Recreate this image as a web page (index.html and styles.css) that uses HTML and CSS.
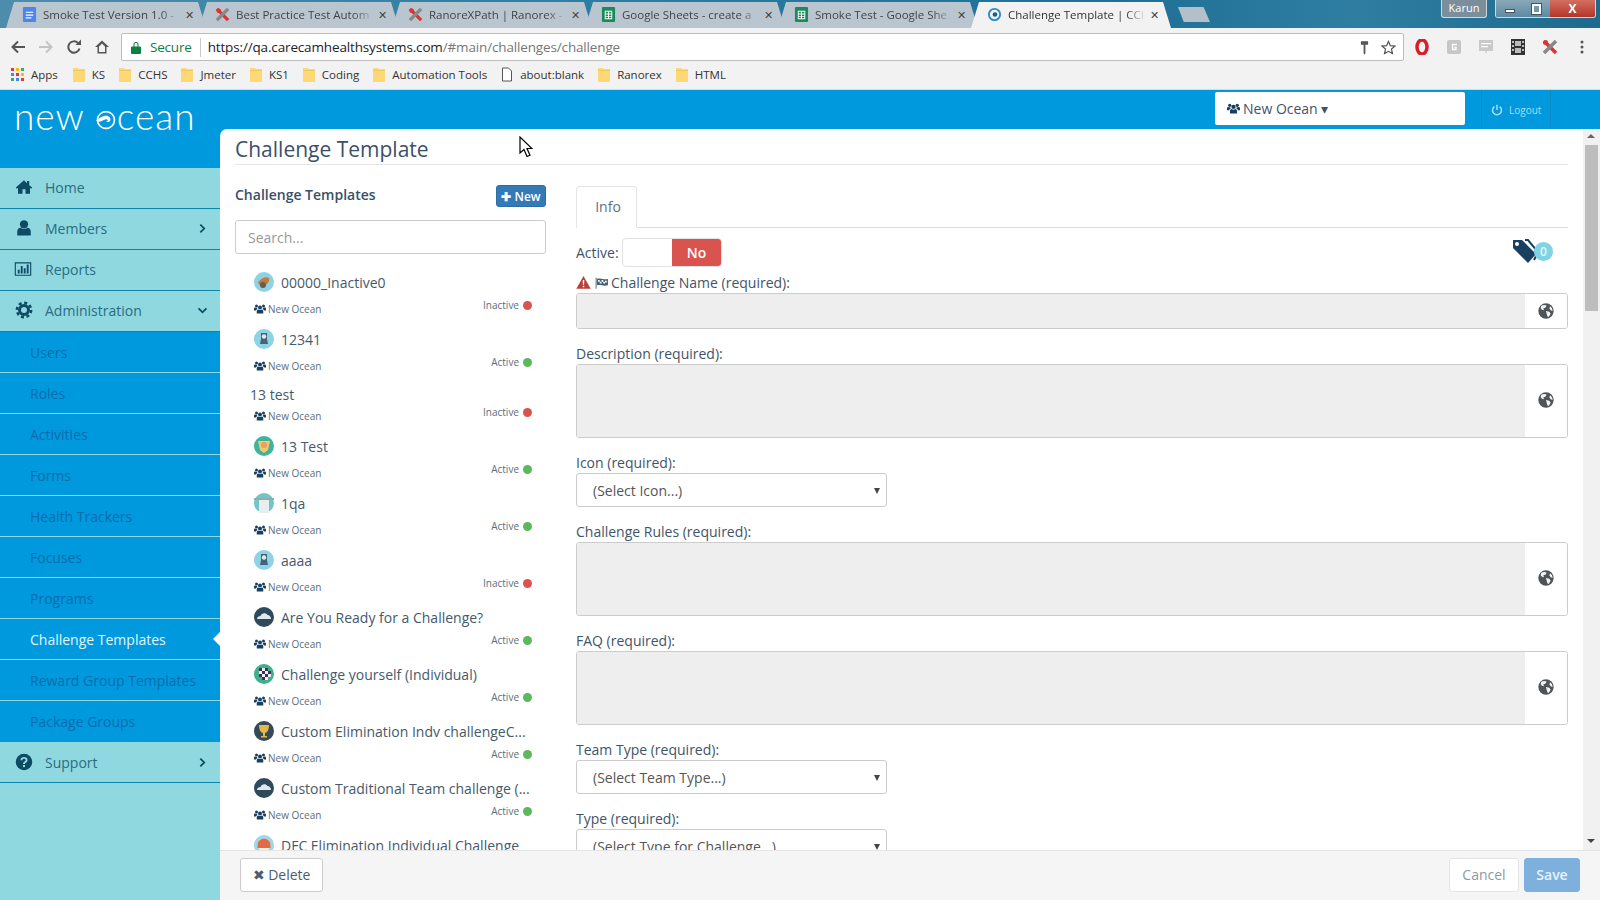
FILE: index.html
```html
<!doctype html>
<html lang="en">
<head>
    <meta charset="UTF-8">
    <title>Challenge Template | CCI</title>
    <link rel="stylesheet" href="styles.css">
</head>
<body>
    <svg class="defs" width="0" height="0">
        <symbol id="i-home" viewBox="0 0 24 24"><path d="M12 3 1 12.6l1.4 1.7L4 13v8h6v-6h4v6h6v-8l1.6 1.3 1.4-1.7L19 9.7V4h-3v3z"/></symbol>
        <symbol id="i-user" viewBox="0 0 24 24"><circle cx="12" cy="7" r="5.5"/><path d="M3 22v-5c0-3.500 2-5.500 4.500-5.500 1.200 1 2.800 1.700 4.500 1.700s3.300-.7 4.500-1.700c2.500 0 4.500 2 4.500 5.500v5z"/></symbol>
        <symbol id="i-chart" viewBox="0 0 24 24"><path d="M1 3h22v18H1zm1.500 1.500v15h19v-15z" fill-rule="evenodd"/><path d="M5 13h2.500v5H5zM9 8h2.500v10H9zM13 11h2.500v7H13zM17 6h2.500v12H17z"/></symbol>
        <symbol id="i-cog" viewBox="0 0 24 24"><circle cx="12" cy="12" r="6" fill="none" stroke="currentColor" stroke-width="4"/><circle cx="12" cy="12" r="9.500" fill="none" stroke="currentColor" stroke-width="3.500" stroke-dasharray="4 3.460"/></symbol>
        <symbol id="i-help" viewBox="0 0 24 24"><circle cx="12" cy="12" r="11"/><path d="M8.500 9.500c0-2 1.500-3 3.500-3s3.500 1.200 3.500 3c0 2.500-3.500 2.500-3.500 5" fill="none" stroke="#8fd8e0" stroke-width="2.600"/><rect x="10.600" y="16" width="2.800" height="2.800" fill="#8fd8e0"/></symbol>
        <symbol id="i-users" viewBox="0 0 24 24"><circle cx="12" cy="9" r="4"/><path d="M5.500 21v-4.500c0-2 1.500-3.500 3-3.500 1 .8 2.200 1.200 3.500 1.200s2.500-.4 3.500-1.200c1.500 0 3 1.500 3 3.500V21z"/><circle cx="5" cy="6" r="3"/><circle cx="19" cy="6" r="3"/><path d="M0 15v-3.500C0 10 1 9 2.500 9c.7.500 1.500.8 2.500.8.400 0 .8 0 1-.1-.1 1 .2 2 .8 2.800C5 13 4 14 3.800 15zM24 15v-3.500C24 10 23 9 21.500 9c-.7.500-1.500.8-2.500.8-.4 0-.8 0-1-.1.100 1-.2 2-.8 2.800 1.800.5 2.800 1.500 3 2.500z"/></symbol>
        <symbol id="i-globe" viewBox="0 0 24 24"><circle cx="12" cy="12" r="11.500" fill="#4f5459"/><path d="M5 4c3-1.500 6-1.500 8 0l-2 3-3 1 1 3-3-1-2-2zM12 12l5 1 2 3-3 5-2-1-1-4zM18 5l3 3 1 4-3-1-2-3z" fill="#f4f4f4"/></symbol>
        <symbol id="i-warn" viewBox="0 0 24 24"><path d="M12 1.500 23.500 22H.5z"/><path d="M10.700 8h2.600l-.4 7.500h-1.800zM10.800 17h2.400v2.400h-2.400z" fill="#fff"/></symbol>
        <symbol id="i-flag" viewBox="0 0 24 24"><path d="M2 3h1.500v19H2z"/><path d="M4 5c5-2 8 2 19 0v11c-9 2-13-2-19 0zm2 2v3h3V7zm6 0v3h3V7zm6 1v3h3V8zM9 10v3h3v-3zm6 0v3h3v-3z" fill-rule="evenodd"/></symbol>
        <symbol id="i-folder" viewBox="0 0 12 15"><path d="M0 1h5l1 1h6v13H0z" fill="#fcd877"/><path d="M0 3h12v1H0z" fill="#f4c75d"/></symbol>
    </svg>

    <div class="browser">
        <div class="tabstrip">
            <div class="tab">
                <svg class="favicon" viewBox="0 0 16 16"><rect x="1" width="14" height="16" rx="1" fill="#4d86e8"/><path d="M4 5h8v1.200H4zM4 8h8v1.200H4zM4 11h6v1.200H4z" fill="#fff"/></svg>
                <span class="tab-title">Smoke Test Version 1.0 -</span><span class="tab-x">✕</span>
            </div>
            <div class="tab">
                <svg class="favicon" viewBox="0 0 16 16"><path d="M2 2 14 14" stroke="#d33" stroke-width="3.500"/><path d="M14 2 2 14" stroke="#888" stroke-width="3.500"/><circle cx="4" cy="4" r="2.500" fill="#d33"/></svg>
                <span class="tab-title">Best Practice Test Autom</span><span class="tab-x">✕</span>
            </div>
            <div class="tab">
                <svg class="favicon" viewBox="0 0 16 16"><path d="M2 2 14 14" stroke="#d33" stroke-width="3.500"/><path d="M14 2 2 14" stroke="#888" stroke-width="3.500"/><circle cx="4" cy="4" r="2.500" fill="#d33"/></svg>
                <span class="tab-title">RanoreXPath | Ranorex -</span><span class="tab-x">✕</span>
            </div>
            <div class="tab">
                <svg class="favicon" viewBox="0 0 16 16"><rect x="1" width="14" height="16" rx="1" fill="#1b8a5a"/><path d="M4 4h8v9H4zm1 1v2h2.500V5zm3.500 0v2H11V5zM5 8v1.500h2.500V8zm3.500 0v1.500H11V8zM5 10.500V12h2.500v-1.500zm3.500 0V12H11v-1.500z" fill="#fff" fill-rule="evenodd"/></svg>
                <span class="tab-title">Google Sheets - create a</span><span class="tab-x">✕</span>
            </div>
            <div class="tab">
                <svg class="favicon" viewBox="0 0 16 16"><rect x="1" width="14" height="16" rx="1" fill="#1b8a5a"/><path d="M4 4h8v9H4zm1 1v2h2.500V5zm3.500 0v2H11V5zM5 8v1.500h2.500V8zm3.500 0v1.500H11V8zM5 10.500V12h2.500v-1.500zm3.500 0V12H11v-1.500z" fill="#fff" fill-rule="evenodd"/></svg>
                <span class="tab-title">Smoke Test - Google She</span><span class="tab-x">✕</span>
            </div>
            <div class="tab tab-active">
                <svg class="favicon" viewBox="0 0 16 16"><circle cx="8" cy="8" r="6" fill="none" stroke="#2b8fc4" stroke-width="2"/><circle cx="8.500" cy="8" r="2.500" fill="#1d5f86"/></svg>
                <span class="tab-title">Challenge Template | CCI</span><span class="tab-x">✕</span>
            </div>
            <div class="tab-new"></div>
            <div class="window-btns">
                <div class="profile">Karun</div>
                <div class="win-group">
                    <div class="win-btn"><span class="win-min"></span></div>
                    <div class="win-btn"><span class="win-max"></span></div>
                    <div class="win-btn win-close">X</div>
                </div>
            </div>
        </div>

        <div class="toolbar">
            <svg class="tool" viewBox="0 0 16 16"><path d="M15 8H3M8 2.500 2.500 8 8 13.500" fill="none" stroke="#555" stroke-width="2"/></svg>
            <svg class="tool" viewBox="0 0 16 16"><path d="M1 8h12M8 2.500 13.500 8 8 13.500" fill="none" stroke="#c4c4c4" stroke-width="2"/></svg>
            <svg class="tool" viewBox="0 0 16 16"><path d="M13.500 9.500A5.700 5.700 0 1 1 12 4" fill="none" stroke="#555" stroke-width="2"/><path d="M9.500 6H15V.5z" fill="#555"/></svg>
            <svg class="tool" viewBox="0 0 16 16"><path d="M8 1.500 1 8h2.500v6.500h9V8H15zM5 13V7.500l3-3 3 3V13z" fill="#555" fill-rule="evenodd"/></svg>
            <div class="omnibox">
                <svg class="lock" viewBox="0 0 10 13"><path d="M2.500 6V3.500a2.500 2.500 0 0 1 5 0V6H6.500V3.500a1.500 1.500 0 0 0-3 0V6z" fill="#0b8043"/><rect y="5.500" width="10" height="7.500" rx="1" fill="#0b8043"/></svg>
                <span class="secure">Secure</span>
                <span class="url"><span class="url-host">https://qa.carecamhealthsystems.com</span>/#main/challenges/challenge</span>
                <svg class="omni-icon" viewBox="0 0 10 16"><path d="M1 1h8v4H6v9.500L5 16l-1-1.500V5H1z" fill="#555"/></svg>
                <svg class="omni-icon omni-star" viewBox="0 0 16 16"><path d="m8 1.500 2 4.500 4.800.5-3.600 3.200 1 4.800L8 12.100l-4.200 2.400 1-4.800L1.200 6.500 6 6z" fill="none" stroke="#555" stroke-width="1.300"/></svg>
            </div>
            <div class="extensions">
                <svg class="ext" viewBox="0 0 16 16"><ellipse cx="8" cy="8" rx="5" ry="7" fill="none" stroke="#d5202a" stroke-width="3.500"/></svg>
                <svg class="ext" viewBox="0 0 16 16"><rect x="1" y="1" width="14" height="14" rx="2" fill="#c6c6c6"/><path d="M11 5.500H6.500v5H10V8.500H8.500" fill="none" stroke="#fff" stroke-width="1.300"/></svg>
                <svg class="ext" viewBox="0 0 16 16"><path d="M1 1h14v11H9l-1 3-1-3H1z" fill="#c9c9c9"/><path d="M3 4h10v1.200H3zM3 7h7v1.200H3z" fill="#fff"/></svg>
                <svg class="ext" viewBox="0 0 16 16"><path d="M1 0h14v16H1z" fill="#333"/><path d="M2 2h2v2H2zm0 4h2v2H2zm0 4h2v2H2zm10-8h2v2h-2zm0 4h2v2h-2zm0 4h2v2h-2zM5 2h6v5H5zm0 7h6v5H5z" fill="#bbb"/></svg>
                <svg class="ext" viewBox="0 0 16 16"><path d="M2 2 14 14" stroke="#d33" stroke-width="3.500"/><path d="M14 2 2 14" stroke="#888" stroke-width="3.500"/><circle cx="3.500" cy="3.500" r="2.500" fill="#d33"/></svg>
                <svg class="ext" viewBox="0 0 16 16"><circle cx="8" cy="3" r="1.500" fill="#555"/><circle cx="8" cy="8" r="1.500" fill="#555"/><circle cx="8" cy="13" r="1.500" fill="#555"/></svg>
            </div>
        </div>

        <div class="bookmarks">
            <span class="bm bm-apps">
                <svg class="apps-grid" viewBox="0 0 13 13">
                    <rect width="3" height="3" fill="#e33"/><rect x="5" width="3" height="3" fill="#fb0"/><rect x="10" width="3" height="3" fill="#3a7"/>
                    <rect y="5" width="3" height="3" fill="#48e"/><rect x="5" y="5" width="3" height="3" fill="#e33"/><rect x="10" y="5" width="3" height="3" fill="#fb0"/>
                    <rect y="10" width="3" height="3" fill="#3a7"/><rect x="5" y="10" width="3" height="3" fill="#48e"/><rect x="10" y="10" width="3" height="3" fill="#e33"/>
                </svg>Apps</span>
            <span class="bm"><svg class="bm-folder"><use href="#i-folder"/></svg>KS</span>
            <span class="bm"><svg class="bm-folder"><use href="#i-folder"/></svg>CCHS</span>
            <span class="bm"><svg class="bm-folder"><use href="#i-folder"/></svg>Jmeter</span>
            <span class="bm"><svg class="bm-folder"><use href="#i-folder"/></svg>KS1</span>
            <span class="bm"><svg class="bm-folder"><use href="#i-folder"/></svg>Coding</span>
            <span class="bm"><svg class="bm-folder"><use href="#i-folder"/></svg>Automation Tools</span>
            <span class="bm"><svg class="bm-folder" viewBox="0 0 12 15"><path d="M1.500 1h6l3 3v10h-9z" fill="#fff" stroke="#555"/></svg>about:blank</span>
            <span class="bm"><svg class="bm-folder"><use href="#i-folder"/></svg>Ranorex</span>
            <span class="bm"><svg class="bm-folder"><use href="#i-folder"/></svg>HTML</span>
        </div>
    </div>

    <div class="app">
        <aside class="sidebar">
            <div class="logo">new<svg class="logo-o" viewBox="0 0 26 26"><circle cx="13" cy="13" r="10" fill="none" stroke="#fff" stroke-width="2"/><path d="M1 14c5-3 7-6 12-6 4 0 6 3 5 6-1 2-4 2-5 0 3 1 3-2 0-2-4 0-5 5-12 2z" fill="#fff"/></svg>cean</div>
            <nav class="nav">
                <a class="nav-item"><svg class="nav-icon"><use href="#i-home"/></svg>Home</a>
                <a class="nav-item"><svg class="nav-icon"><use href="#i-user"/></svg>Members<svg class="chev" viewBox="0 0 8 12"><path d="M1.500 1.500 6 6l-4.500 4.500" fill="none" stroke="currentColor" stroke-width="2"/></svg></a>
                <a class="nav-item"><svg class="nav-icon nav-icon-wide"><use href="#i-chart"/></svg>Reports</a>
                <a class="nav-item"><svg class="nav-icon"><use href="#i-cog"/></svg>Administration<svg class="chev chev-down" viewBox="0 0 12 8"><path d="M1.500 1.500 6 6l4.500-4.500" fill="none" stroke="currentColor" stroke-width="2"/></svg></a>
                <div class="subnav">
                    <a class="sub-item">Users</a>
                    <a class="sub-item">Roles</a>
                    <a class="sub-item">Activities</a>
                    <a class="sub-item">Forms</a>
                    <a class="sub-item">Health Trackers</a>
                    <a class="sub-item">Focuses</a>
                    <a class="sub-item">Programs</a>
                    <a class="sub-item sub-active">Challenge Templates</a>
                    <a class="sub-item">Reward Group Templates</a>
                    <a class="sub-item sub-last">Package Groups</a>
                </div>
                <a class="nav-item nav-item-support"><svg class="nav-icon"><use href="#i-help"/></svg>Support<svg class="chev" viewBox="0 0 8 12"><path d="M1.500 1.500 6 6l-4.500 4.500" fill="none" stroke="currentColor" stroke-width="2"/></svg></a>
            </nav>
        </aside>

        <main class="main">
            <header class="topbar">
                <div class="org-select"><svg class="ic-users"><use href="#i-users"/></svg>New Ocean ▾</div>
                <div class="logout">
                    <svg class="logout-icon" viewBox="0 0 16 16"><path d="M8 1v7" stroke="currentColor" stroke-width="2"/><path d="M4.500 3.500a6 6 0 1 0 7 0" fill="none" stroke="currentColor" stroke-width="2"/></svg>Logout
                </div>
            </header>

            <div class="content">
                <div class="scroll-area">
                    <div class="page">
                        <h1 class="page-title">Challenge Template</h1>
                        <div class="columns">
                            <section class="list-col">
                                <div class="list-head">
                                    <h2>Challenge Templates</h2>
                                    <button class="btn-new">✚ New</button>
                                </div>
                                <input class="search" type="text" placeholder="Search...">
                                <ul class="items">
                                    <li class="item">
                                        <div class="item-title"><svg class="avatar" viewBox="0 0 20 20"><circle cx="10" cy="10" r="10" fill="#8ed2e6"/><path d="M4 11c2-4 7-7 11-5 1 3-1 6-4 7-3 2-5 1-7-2z" fill="#c9793a"/><circle cx="9" cy="13" r="3" fill="#6b5b4a"/></svg>00000_Inactive0</div>
                                        <div class="item-sub"><span class="org"><svg class="ic-users"><use href="#i-users"/></svg>New Ocean</span><span class="status">Inactive<i class="dot dot-off"></i></span></div>
                                    </li>
                                    <li class="item">
                                        <div class="item-title"><svg class="avatar" viewBox="0 0 20 20"><circle cx="10" cy="10" r="10" fill="#8ed2e6"/><path d="M7 4h6v6l1 5H6l1-5z" fill="#47627c"/><circle cx="10" cy="7.500" r="2.200" fill="#e8e8e8"/></svg>12341</div>
                                        <div class="item-sub"><span class="org"><svg class="ic-users"><use href="#i-users"/></svg>New Ocean</span><span class="status">Active<i class="dot dot-on"></i></span></div>
                                    </li>
                                    <li class="item item-plain">
                                        <div class="item-title">13 test</div>
                                        <div class="item-sub"><span class="org"><svg class="ic-users"><use href="#i-users"/></svg>New Ocean</span><span class="status">Inactive<i class="dot dot-off"></i></span></div>
                                    </li>
                                    <li class="item">
                                        <div class="item-title"><svg class="avatar" viewBox="0 0 20 20"><circle cx="10" cy="10" r="10" fill="#3fb39b"/><path d="M4 5h12l-2 9-4 3-4-3z" fill="#f2c76e"/><circle cx="10" cy="9" r="3" fill="#e8a05a"/></svg>13 Test</div>
                                        <div class="item-sub"><span class="org"><svg class="ic-users"><use href="#i-users"/></svg>New Ocean</span><span class="status">Active<i class="dot dot-on"></i></span></div>
                                    </li>
                                    <li class="item">
                                        <div class="item-title"><svg class="avatar" viewBox="0 0 20 20"><circle cx="10" cy="10" r="10" fill="#6fc7c4"/><path d="M5 5h10v15H5z" fill="#e8eef0"/><path d="M0 5h20v2H0z" fill="#98a8b0"/></svg>1qa</div>
                                        <div class="item-sub"><span class="org"><svg class="ic-users"><use href="#i-users"/></svg>New Ocean</span><span class="status">Active<i class="dot dot-on"></i></span></div>
                                    </li>
                                    <li class="item">
                                        <div class="item-title"><svg class="avatar" viewBox="0 0 20 20"><circle cx="10" cy="10" r="10" fill="#8ed2e6"/><path d="M7 4h6v6l1 5H6l1-5z" fill="#47627c"/><circle cx="10" cy="7.500" r="2.200" fill="#e8e8e8"/></svg>aaaa</div>
                                        <div class="item-sub"><span class="org"><svg class="ic-users"><use href="#i-users"/></svg>New Ocean</span><span class="status">Inactive<i class="dot dot-off"></i></span></div>
                                    </li>
                                    <li class="item">
                                        <div class="item-title"><svg class="avatar" viewBox="0 0 20 20"><circle cx="10" cy="10" r="10" fill="#2f4a5a"/><path d="M3 12c0-2 2-3 3.500-3C7 6 12 5 13.500 8c2 0 3.500 2 3.500 4z" fill="#dfe9ee"/></svg>Are You Ready for a Challenge?</div>
                                        <div class="item-sub"><span class="org"><svg class="ic-users"><use href="#i-users"/></svg>New Ocean</span><span class="status">Active<i class="dot dot-on"></i></span></div>
                                    </li>
                                    <li class="item">
                                        <div class="item-title"><svg class="avatar" viewBox="0 0 20 20"><circle cx="10" cy="10" r="10" fill="#3fb08a"/><path d="M5 4h3v3H5zm6 0h3v3h-3zM8 7h3v3H8zm6 0h3v3h-3zM5 10h3v3H5zm6 0h3v3h-3zM8 13h3v3H8z" fill="#40305a"/><path d="M8 4h3v3H8zM5 7h3v3H5zm6 0h3v3h-3zm-3 3h3v3H8zm6 0h3v3h-3zm-3 3h3v3h-3z" fill="#f0f0f0"/></svg>Challenge yourself (Individual)</div>
                                        <div class="item-sub"><span class="org"><svg class="ic-users"><use href="#i-users"/></svg>New Ocean</span><span class="status">Active<i class="dot dot-on"></i></span></div>
                                    </li>
                                    <li class="item">
                                        <div class="item-title"><svg class="avatar" viewBox="0 0 20 20"><circle cx="10" cy="10" r="10" fill="#34495a"/><path d="M5 4h10c0 5-2 8-4 8v3h2v1.500H7V15h2v-3c-2 0-4-3-4-8z" fill="#e3b94a"/></svg>Custom Elimination Indv challengeC...</div>
                                        <div class="item-sub"><span class="org"><svg class="ic-users"><use href="#i-users"/></svg>New Ocean</span><span class="status">Active<i class="dot dot-on"></i></span></div>
                                    </li>
                                    <li class="item">
                                        <div class="item-title"><svg class="avatar" viewBox="0 0 20 20"><circle cx="10" cy="10" r="10" fill="#2f4a5a"/><path d="M3 12c0-2 2-3 3.500-3C7 6 12 5 13.500 8c2 0 3.500 2 3.500 4z" fill="#dfe9ee"/></svg>Custom Traditional Team challenge (...</div>
                                        <div class="item-sub"><span class="org"><svg class="ic-users"><use href="#i-users"/></svg>New Ocean</span><span class="status">Active<i class="dot dot-on"></i></span></div>
                                    </li>
                                    <li class="item">
                                        <div class="item-title"><svg class="avatar" viewBox="0 0 20 20"><circle cx="10" cy="10" r="10" fill="#9fd8e6"/><circle cx="10" cy="10" r="6.500" fill="#f0f0e0"/><path d="M3.500 10a6.500 6.500 0 0 1 13 0v3h-13z" fill="#e2694a"/></svg>DFC Elimination Individual Challenge</div>
                                    </li>
                                </ul>
                            </section>

                            <section class="form-col">
                                <div class="tabs"><span class="form-tab">Info</span></div>
                                <div class="active-row">
                                    <span class="active-label">Active:</span>
                                    <span class="toggle"><span class="toggle-off"></span><span class="toggle-no">No</span></span>
                                    <span class="tag-wrap">
                                        <svg class="tag-icon" viewBox="0 0 26 26"><path d="M1 1h9l14 14-8 9L1 9z" fill="#163f62"/><circle cx="5" cy="5" r="2" fill="#fff"/><path d="M13 1h3l10 12-4 8" fill="none" stroke="#163f62" stroke-width="2"/></svg>
                                        <span class="tag-count">0</span>
                                    </span>
                                </div>

                                <div class="group group-first">
                                    <label class="label"><svg class="ic-warn"><use href="#i-warn"/></svg><svg class="ic-flag"><use href="#i-flag"/></svg>Challenge Name (required):</label>
                                    <div class="field field-input"><div class="field-fill"></div><div class="addon"><svg class="globe"><use href="#i-globe"/></svg></div></div>
                                </div>
                                <div class="group">
                                    <label class="label">Description (required):</label>
                                    <div class="field field-area"><div class="field-fill"></div><div class="addon"><svg class="globe"><use href="#i-globe"/></svg></div></div>
                                </div>
                                <div class="group">
                                    <label class="label">Icon (required):</label>
                                    <div class="select">(Select Icon...)</div>
                                </div>
                                <div class="group">
                                    <label class="label">Challenge Rules (required):</label>
                                    <div class="field field-area"><div class="field-fill"></div><div class="addon"><svg class="globe"><use href="#i-globe"/></svg></div></div>
                                </div>
                                <div class="group">
                                    <label class="label">FAQ (required):</label>
                                    <div class="field field-area"><div class="field-fill"></div><div class="addon"><svg class="globe"><use href="#i-globe"/></svg></div></div>
                                </div>
                                <div class="group">
                                    <label class="label">Team Type (required):</label>
                                    <div class="select">(Select Team Type...)</div>
                                </div>
                                <div class="group">
                                    <label class="label">Type (required):</label>
                                    <div class="select">(Select Type for Challenge...)</div>
                                </div>
                            </section>
                        </div>
                    </div>
                    <div class="scrollbar">
                        <span class="arrow-up"></span>
                        <div class="thumb-track"><div class="thumb"></div></div>
                        <span class="arrow-down"></span>
                    </div>
                </div>
                <footer class="footer">
                    <button class="btn btn-delete">✖ Delete</button>
                    <div class="footer-right">
                        <button class="btn btn-cancel">Cancel</button>
                        <button class="btn btn-save">Save</button>
                    </div>
                </footer>
            </div>
        </main>
    </div>

    <svg class="cursor" viewBox="0 0 14 22"><path d="M1 1v16l4-3.500 3 7 3-1.300-3-6.700h5z" fill="#fff" stroke="#000" stroke-width="1.200"/></svg>
</body>
</html>
```

FILE: styles.css
```css
* {
    margin: 0;
    padding: 0;
    box-sizing: border-box;
}

html, body {
    height: 900px;
    overflow: hidden;
}

body {
    display: flex;
    flex-direction: column;
    font-family: "Open Sans", "Liberation Sans", sans-serif;
    font-size: 14px;
    color: #3f5468;
    background: #fff;
    position: relative;
}

.defs {
    position: absolute;
}

svg {
    fill: currentColor;
    flex: none;
}

/* browser chrome */
.browser {
    height: 90px;
    flex: none;
    background: #f2f2f2;
    border-bottom: 1px solid #d8d8d8;
}

.tabstrip {
    height: 28px;
    display: flex;
    align-items: flex-end;
    padding-left: 6px;
    background: linear-gradient(90deg, #4d8dab 0, #2c7ea3 35%, #1f6f96 70%, #2f7ea2 85%, #1c6a8e 100%);
}

.tab {
    width: 200px;
    height: 26px;
    margin-right: -7px;
    display: flex;
    align-items: center;
    padding: 0 12px 2px 16px;
    font-size: 11.500px;
    color: #444;
    background: #b9c6cf;
    clip-path: polygon(0 100%, 8px 0, calc(100% - 8px) 0, 100% 100%);
}

.tab-active {
    background: #f2f2f2;
    color: #333;
}

.favicon {
    width: 15px;
    height: 15px;
    margin-right: 6px;
}

.tab-title {
    flex: 1;
    white-space: nowrap;
    overflow: hidden;
    -webkit-mask-image: linear-gradient(90deg, #000 85%, transparent);
    mask-image: linear-gradient(90deg, #000 85%, transparent);
}

.tab-x {
    font-size: 11px;
    margin-left: 4px;
    color: #444;
}

.tab-new {
    width: 32px;
    height: 15px;
    margin: 0 0 6px 14px;
    background: #b4c0c9;
    clip-path: polygon(0 0, 80% 0, 100% 100%, 18% 100%);
}

.window-btns {
    margin-left: auto;
    align-self: flex-start;
    display: flex;
    gap: 8px;
    padding-right: 4px;
}

.profile {
    width: 46px;
    height: 18px;
    font-size: 11px;
    line-height: 16px;
    text-align: center;
    color: #fff;
    background: #7b8e9b;
    border: 1px solid #cfd8de;
    border-top: 0;
    border-radius: 0 0 3px 3px;
}

.win-group {
    display: flex;
    height: 18px;
    width: 101px;
    border: 1px solid #cfd8de;
    border-top: 0;
    border-radius: 0 0 3px 3px;
    overflow: hidden;
}

.win-btn {
    width: 27px;
    display: flex;
    align-items: center;
    justify-content: center;
    background: linear-gradient(#8aa8b8, #5d8aa2);
}

.win-min {
    width: 10px;
    height: 4px;
    margin-top: 5px;
    background: #fff;
    border: 1px solid #456;
}

.win-max {
    width: 9px;
    height: 10px;
    border: 2px solid #fff;
    outline: 1px solid #456;
}

.win-close {
    flex: 1;
    color: #fff;
    font-size: 12px;
    font-weight: 700;
    background: linear-gradient(#d2705f, #b5342a);
}

.toolbar {
    height: 33px;
    display: flex;
    align-items: center;
    padding: 5px 9px 0 10px;
}

.tool {
    width: 16px;
    height: 16px;
    margin-right: 12px;
}

.omnibox {
    width: 1283px;
    height: 28px;
    margin-left: -1px;
    display: flex;
    align-items: center;
    background: #fff;
    border: 1px solid #bdbdbd;
    border-radius: 2px;
    padding: 0 7px 0 9px;
    font-size: 13.500px;
    white-space: nowrap;
}

.lock {
    width: 10px;
    height: 13px;
    margin-right: 9px;
}

.secure {
    color: #0b8043;
    padding-right: 8px;
    margin-right: 7px;
    border-right: 1px solid #c8c8c8;
    line-height: 19px;
    letter-spacing: -0.2px;
}

.url {
    flex: 1;
    color: #777;
    letter-spacing: -0.15px;
}

.url-host {
    color: #222;
}

.omni-icon {
    width: 9px;
    height: 15px;
    margin-right: 12px;
}

.omni-star {
    width: 15px;
    margin-right: 0;
}

.extensions {
    display: flex;
    align-items: center;
    gap: 16px;
    margin-left: 10px;
}

.ext {
    width: 16px;
    height: 16px;
}

.bookmarks {
    height: 28px;
    display: flex;
    align-items: center;
    padding: 0 0 2px 11px;
    font-size: 11.500px;
    color: #333;
}

.bm {
    display: flex;
    align-items: center;
    margin-right: 14px;
    white-space: nowrap;
}

.bm-apps {
    margin-right: 15px;
}

.apps-grid {
    width: 13px;
    height: 13px;
    margin-right: 7px;
}

.bm-folder {
    width: 12px;
    height: 15px;
    margin-right: 7px;
}

/* app */
.app {
    height: 810px;
    display: flex;
    background: #0099dd;
}

.sidebar {
    width: 220px;
    flex: none;
    background: #8fd8e0;
}

.logo {
    height: 78px;
    background: #0099dd;
    color: #fff;
    font-family: "Lato", "Open Sans", sans-serif;
    font-weight: 300;
    font-size: 37px;
    padding: 2px 0 0 14px;
    display: flex;
    align-items: flex-start;
    line-height: 48px;
    letter-spacing: 1px;
}

.logo-o {
    width: 22px;
    height: 22px;
    margin: 17px 0 0 10px;
}

.nav-item {
    height: 41px;
    display: flex;
    align-items: center;
    padding: 0 14px 2px 15px;
    color: #2a6c80;
    font-size: 14px;
    border-bottom: 1px solid #0a86ad;
}

.nav-item-support {
    padding-bottom: 0;
}

.nav-icon {
    width: 18px;
    height: 18px;
    margin-right: 12px;
    color: #0e4a63;
}

.nav-icon-wide {
    width: 22px;
    margin-left: -3px;
    margin-right: 11px;
}

.chev {
    width: 7px;
    height: 11px;
    margin-left: auto;
    color: #0e4a63;
}

.chev-down {
    width: 11px;
    height: 7px;
    margin-right: -2px;
}

.subnav {
    background: #0099dd;
}

.sub-item {
    position: relative;
    display: block;
    height: 41px;
    line-height: 42px;
    padding-left: 30px;
    font-size: 14px;
    color: #0b6cad;
    border-bottom: 1px solid #8fd8e0;
}

.sub-last {
    border-bottom: 0;
}

.sub-active {
    color: #e2f6fd;
}

.sub-active::after {
    content: "";
    position: absolute;
    right: 0;
    top: 13px;
    border: 7px solid transparent;
    border-left: 0;
    border-right-color: #fff;
}

/* main */
.main {
    flex: 1;
    min-width: 0;
    display: flex;
    flex-direction: column;
}

.topbar {
    height: 39px;
    flex: none;
    display: flex;
    align-items: flex-start;
    padding: 2px 0 0 995px;
}

.org-select {
    width: 250px;
    height: 33px;
    display: flex;
    align-items: center;
    padding-left: 12px;
    background: #fff;
    border-radius: 2px;
    font-size: 14px;
    color: #3f5468;
}

.ic-users {
    width: 13px;
    height: 13px;
    margin-right: 3px;
    color: #163f62;
}

.logout {
    width: 70px;
    height: 37px;
    margin: -2px 0 0 16px;
    display: flex;
    align-items: center;
    padding: 3px 0 0 9px;
    color: #a6def5;
    font-size: 10px;
    border-left: 1px solid #1089c4;
    border-right: 1px solid #1089c4;
}

.logout-icon {
    width: 12px;
    height: 12px;
    margin-right: 6px;
}

.content {
    flex: 1;
    min-height: 0;
    display: flex;
    flex-direction: column;
    background: #fff;
    border-radius: 7px 0 0 0;
}

.scroll-area {
    flex: 1;
    min-height: 0;
    display: flex;
    overflow: hidden;
}

.page {
    flex: 1;
    min-width: 0;
    padding: 0 15px;
}

.page-title {
    height: 36px;
    font-size: 21px;
    font-weight: 400;
    line-height: 41px;
    color: #3a5068;
    border-bottom: 1px solid #e6e6e6;
}

.columns {
    display: flex;
    gap: 30px;
    padding-top: 21px;
}

.list-col {
    width: 311px;
    flex: none;
    margin-top: -1px;
}

.list-head {
    display: flex;
    justify-content: space-between;
    align-items: center;
    height: 22px;
}

.list-head h2 {
    font-size: 14px;
    font-weight: 600;
    color: #3a5068;
    margin-bottom: 4px;
}

.btn-new {
    width: 50px;
    height: 22px;
    border: 1px solid #2e6da4;
    border-radius: 3px;
    background: #337ab7;
    color: #fff;
    font: 600 12px "Open Sans", sans-serif;
}

.search {
    display: block;
    width: 100%;
    height: 34px;
    margin-top: 13px;
    padding: 0 12px;
    border: 1px solid #ccc;
    border-radius: 3px;
    font: 14px "Open Sans", sans-serif;
    color: #555;
}

.search::placeholder {
    color: #999;
}

.items {
    list-style: none;
    margin-top: 16px;
}

.item {
    height: 57px;
    padding-left: 19px;
    padding-right: 15px;
}

.item-title {
    height: 26px;
    display: flex;
    align-items: center;
    padding-bottom: 2px;
    white-space: nowrap;
    font-size: 14px;
    color: #46596b;
}

.avatar {
    width: 20px;
    height: 20px;
    margin-right: 7px;
}

.item-sub {
    height: 26px;
    display: flex;
    justify-content: space-between;
}

.org {
    display: flex;
    align-items: center;
    height: 26px;
    font-size: 10px;
    color: #5b6d7d;
}

.org .ic-users {
    width: 12px;
    height: 12px;
    margin: 0 2px 0 0;
}

.status {
    display: flex;
    align-items: center;
    height: 18px;
    font-size: 10px;
    color: #5b6d7d;
}

.dot {
    width: 9px;
    height: 9px;
    margin-left: 4px;
    margin-right: -1px;
    border-radius: 50%;
}

.dot-on {
    background: #5cb85c;
}

.dot-off {
    background: #d9534f;
}

.item-plain {
    height: 50px;
    padding-left: 15px;
}

.item-plain .item-title {
    height: 22px;
}

.item-plain .item-sub {
    margin-top: -3px;
    padding-left: 4px;
}

/* form */
.form-col {
    flex: 1;
    min-width: 0;
}

.tabs {
    height: 42px;
    border-bottom: 1px solid #ddd;
}

.form-tab {
    display: block;
    width: 61px;
    height: 42px;
    line-height: 40px;
    padding-left: 3px;
    text-align: center;
    color: #5d6f7f;
    background: #fff;
    border: 1px solid #e4e4e4;
    border-bottom-color: #fff;
    border-radius: 4px 4px 0 0;
}

.active-row {
    height: 29px;
    margin-top: 10px;
    display: flex;
    align-items: center;
}

.active-label {
    margin-right: 3px;
}

.toggle {
    width: 100px;
    height: 29px;
    display: flex;
    border: 1px solid #e2e2e2;
    border-radius: 4px;
    overflow: hidden;
}

.toggle-off {
    width: 50px;
}

.toggle-no {
    flex: 1;
    margin: -1px;
    text-align: center;
    line-height: 29px;
    background: #d9534f;
    color: #fff;
    font-weight: 600;
}

.tag-wrap {
    margin-left: auto;
    margin-right: 15px;
    margin-bottom: 2px;
    display: flex;
    align-items: center;
}

.tag-icon {
    width: 26px;
    height: 26px;
}

.tag-count {
    width: 19px;
    height: 19px;
    margin-left: -4px;
    border-radius: 50%;
    background: #7fd3e2;
    color: #e6f7fb;
    font-size: 12px;
    font-weight: 600;
    line-height: 19px;
    text-align: center;
}

.group {
    margin-bottom: 14px;
}

.group-first {
    margin-top: 5px;
}

.label {
    display: flex;
    align-items: center;
    height: 21px;
}

.ic-warn {
    width: 15px;
    height: 15px;
    margin-right: 3px;
    color: #b8423a;
}

.ic-flag {
    width: 15px;
    height: 14px;
    margin-right: 2px;
    color: #44607a;
}

.field {
    display: flex;
    border: 1px solid #ccc;
    border-radius: 3px;
    overflow: hidden;
}

.field-input {
    height: 36px;
}

.field-area {
    height: 74px;
}

.field-area .globe {
    margin-bottom: 2px;
}

.field-fill {
    flex: 1;
    background: #eee;
}

.addon {
    width: 42px;
    display: flex;
    align-items: center;
    justify-content: center;
    background: #fff;
}

.globe {
    width: 16px;
    height: 16px;
}

.select {
    position: relative;
    width: 311px;
    height: 34px;
    line-height: 33px;
    padding-left: 16px;
    border: 1px solid #ccc;
    border-radius: 3px;
    color: #555;
}

.select::after {
    content: "";
    position: absolute;
    right: 6px;
    top: 14px;
    border: 3.500px solid transparent;
    border-bottom: 0;
    border-top: 6px solid #444;
}

/* scrollbar */
.scrollbar {
    width: 17px;
    flex: none;
    display: flex;
    flex-direction: column;
    background: #f1f1f1;
}

.arrow-up, .arrow-down {
    height: 16px;
    flex: none;
    position: relative;
}

.arrow-up::after, .arrow-down::after {
    content: "";
    position: absolute;
    left: 4px;
    top: 5px;
    border: 4px solid transparent;
    border-top: 0;
    border-bottom-color: #666;
}

.arrow-down::after {
    border-bottom: 0;
    border-top: 4px solid #444;
}

.thumb-track {
    flex: 1;
    padding: 0 2px;
}

.thumb {
    height: 166px;
    background: #bdbdbd;
}

/* footer */
.footer {
    height: 50px;
    flex: none;
    display: flex;
    justify-content: space-between;
    align-items: center;
    padding: 0 20px 2px;
    background: #f5f5f5;
    border-top: 1px solid #e5e5e5;
}

.footer-right {
    display: flex;
    gap: 5px;
}

.btn {
    height: 34px;
    border: 1px solid #ccc;
    border-radius: 3px;
    background: #fff;
    color: #333;
    font: 14px "Open Sans", sans-serif;
}

.btn-delete {
    width: 83px;
    color: #4a5d6e;
}

.btn-cancel {
    width: 70px;
    color: #8d99a5;
    border-color: #e4e4e4;
}

.btn-save {
    width: 56px;
    background: #7eb0de;
    border-color: #7eb0de;
    color: #e8f2fb;
    font-weight: 600;
}

.cursor {
    position: absolute;
    left: 519px;
    top: 136px;
    width: 14px;
    height: 22px;
}
```
